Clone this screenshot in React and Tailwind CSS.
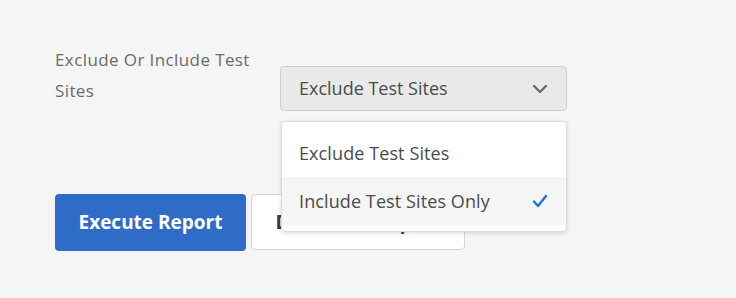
import React from "react";

const Chevron = () => (
  <svg width="16" height="10" viewBox="0 0 16 10" fill="none">
    <path d="M2 2l6 6 6-6" stroke="#6b6b6b" strokeWidth="2.4" strokeLinecap="round" strokeLinejoin="round" />
  </svg>
);

const Check = () => (
  <svg width="16" height="14" viewBox="0 0 16 14" fill="none">
    <path d="M2 7.5l4 4.5 8-10" stroke="#1f73e0" strokeWidth="2.4" strokeLinecap="round" strokeLinejoin="round" />
  </svg>
);

export default function App() {
  return (
    <div className="h-[298px] w-[736px] bg-[#f5f5f5] pl-[55px] pt-[44px] font-['Open_Sans',sans-serif]">
      <div className="flex items-start">
        <div className="w-[225px] text-[17px] leading-[31px] tracking-[0.4px] text-[#6a6a6a]">
          Exclude Or Include Test Sites
        </div>
        <div className="relative mt-[22px] w-[287px]">
          <button className="flex h-[45px] w-full items-center justify-between rounded-[4px] border border-[#d0d0d0] bg-[#e9e9e9] pl-[18px] pr-[18px] text-[18px] text-[#4b4b4b]">
            <span>Exclude Test Sites</span>
            <Chevron />
          </button>
          <div className="absolute left-[1px] top-[55px] z-10 w-[286px] rounded-[4px] border border-[#dcdcdc] bg-white pt-[7px] pb-[6px] shadow-[0_1px_4px_rgba(0,0,0,0.15)]">
            <div className="flex h-[48px] items-center pl-[17px] text-[18px] tracking-[0.1px] text-[#4b4b4b]">
              Exclude Test Sites
            </div>
            <div className="flex h-[48px] items-center justify-between bg-[#f5f5f5] pl-[17px] pr-[18px] text-[18px] tracking-[0.1px] text-[#4b4b4b]">
              <span>Include Test Sites Only</span>
              <Check />
            </div>
          </div>
        </div>
      </div>
      <div className="mt-[83px] flex gap-[5px]">
        <button className="h-[57px] w-[191px] rounded-[4px] bg-[#2f6cc8] text-[19px] font-bold text-white">
          Execute Report
        </button>
        <button className="h-[56px] w-[214px] rounded-[4px] border border-[#d5d5d5] bg-white text-[19px] font-bold text-[#3a3a3a]">
          Download Report
        </button>
      </div>
    </div>
  );
}
